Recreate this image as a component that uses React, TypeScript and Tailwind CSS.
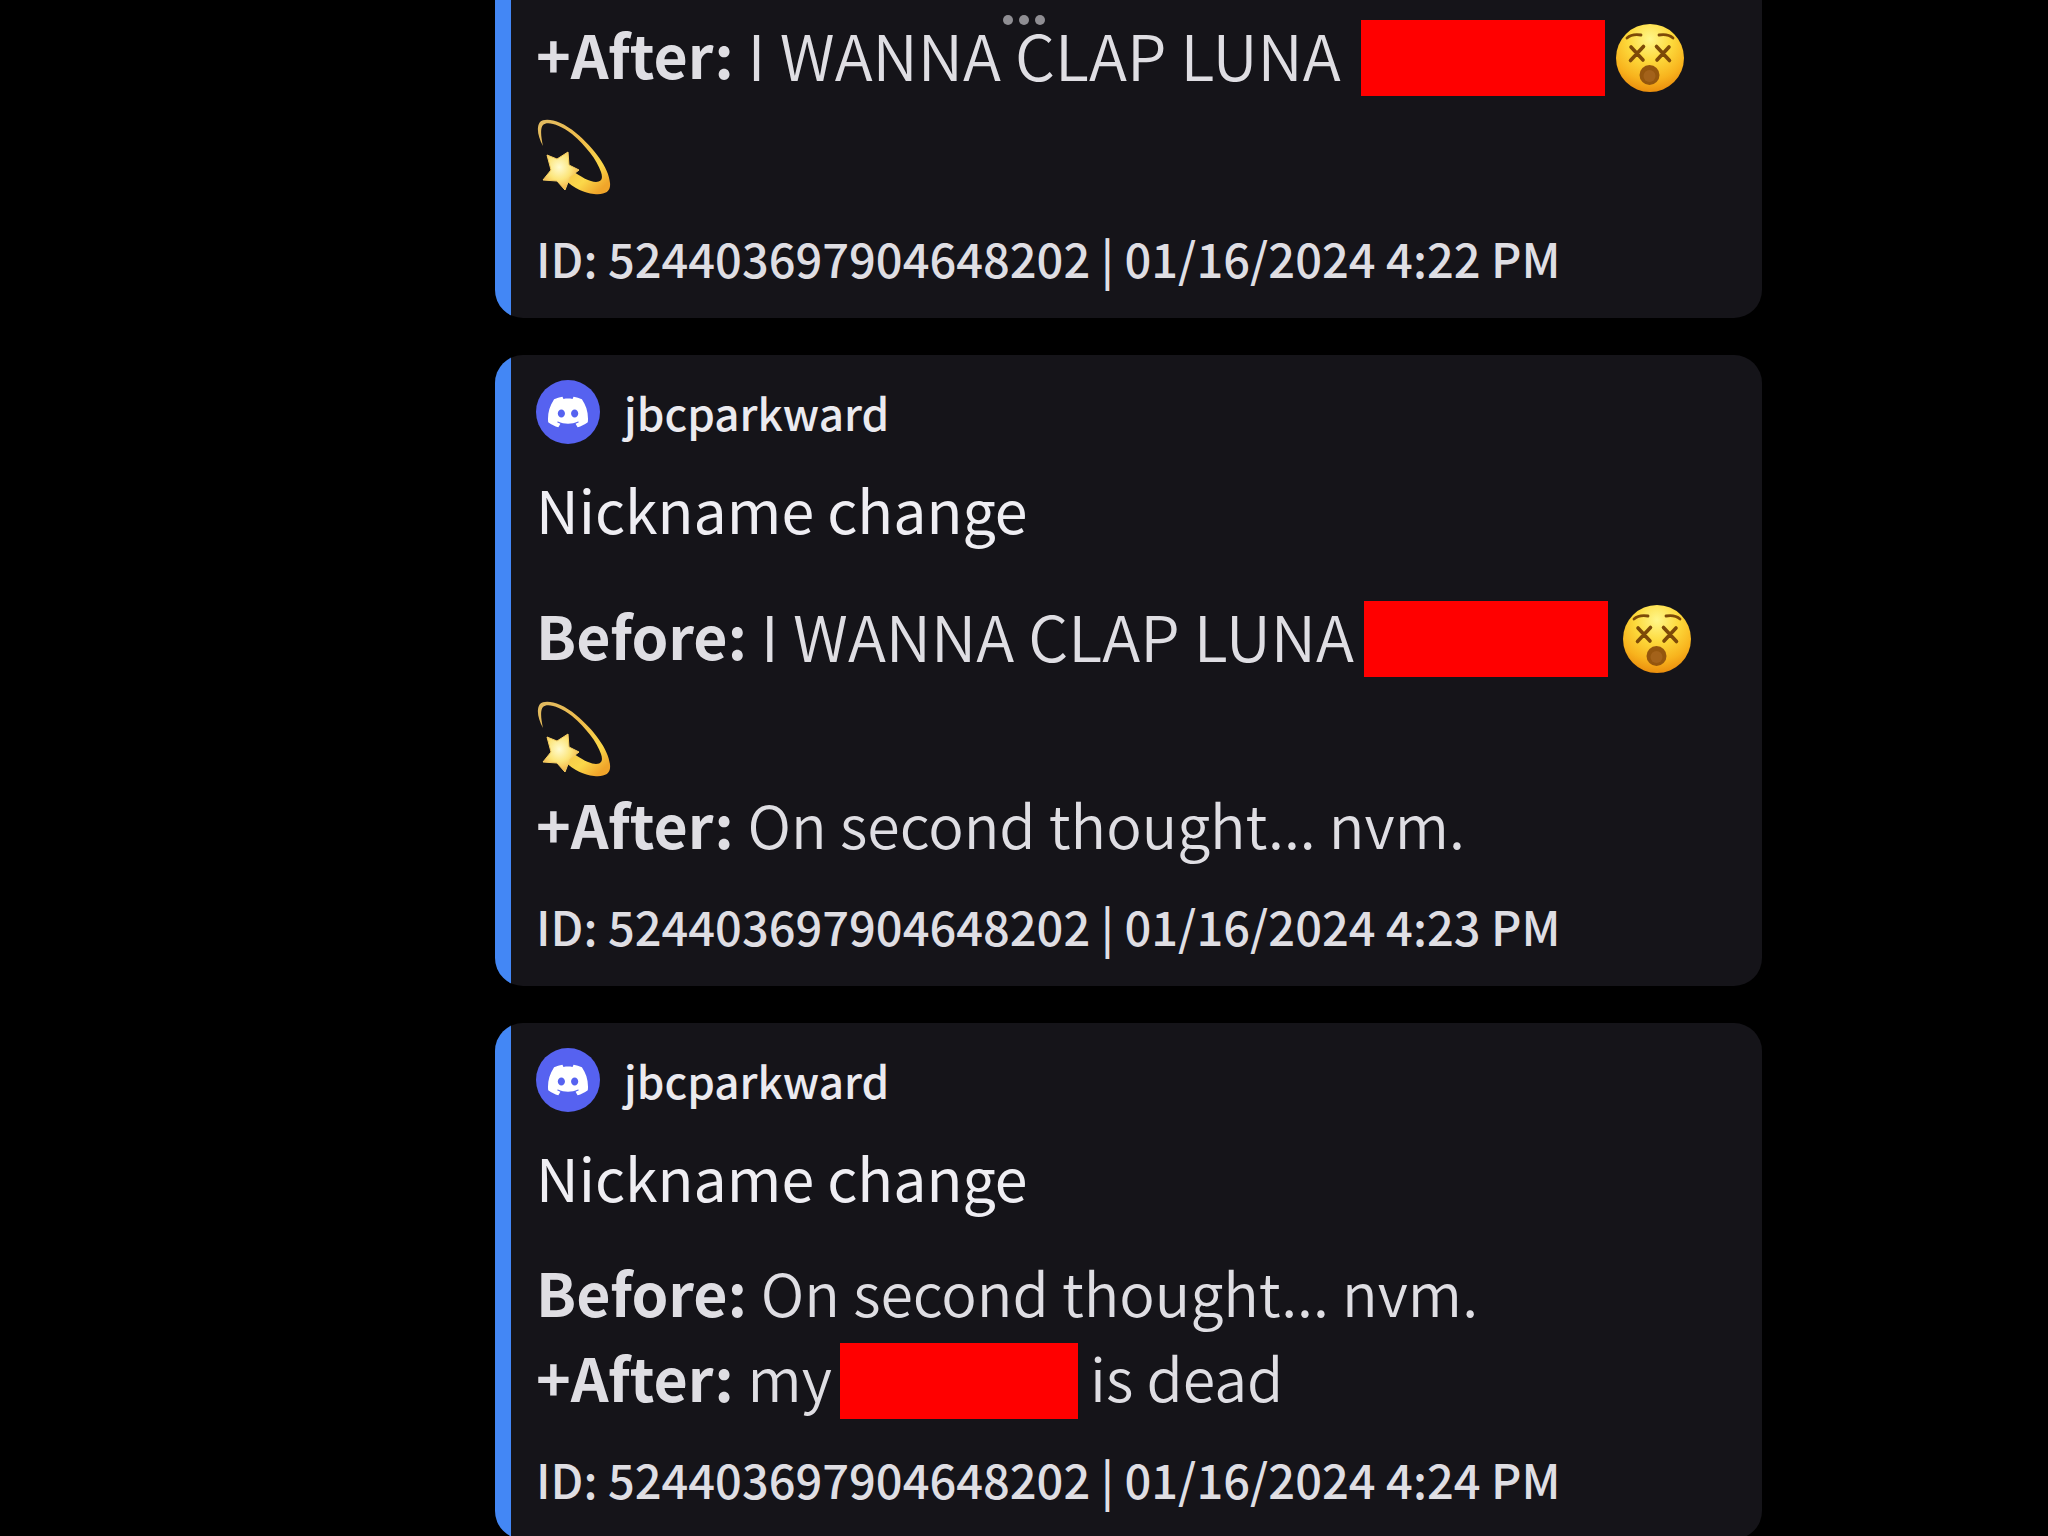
import type { ReactNode } from 'react';
import { SiDiscord } from 'react-icons/si';

function DizzyFace() {
  return (
    <svg viewBox="0 0 70 70" className="mb-[3px] h-[70px] w-[70px] shrink-0" role="img" aria-label="Dizzy face">
      <defs>
        <radialGradient id="face" cx="0.5" cy="0.22" r="0.8">
          <stop offset="0" stopColor="#fff68a" />
          <stop offset="0.4" stopColor="#fdda3c" />
          <stop offset="0.75" stopColor="#f8b31d" />
          <stop offset="1" stopColor="#e98a0c" />
        </radialGradient>
      </defs>
      <circle cx="35" cy="35" r="34" fill="url(#face)" />
      <g fill="none" stroke="#7d4a08" strokeLinecap="round">
        <path d="M12 15Q17 10.5 26 12M44 12Q53 10.5 58 15" strokeWidth="2.8" />
        <path d="M16 24L28 37M28.5 23.5L15.5 37.5M41.5 23.5L54.5 37.5M54 24L42 37" strokeWidth="3.6" />
      </g>
      <circle cx="34.5" cy="52" r="10" fill="#94560e" />
      <circle cx="34.5" cy="53" r="6" fill="#a3621a" />
    </svg>
  );
}

function DizzyStar() {
  return (
    <svg viewBox="0 0 75 76" className="h-[76px] w-[75px] shrink-0" role="img" aria-label="Dizzy">
      <defs>
        <linearGradient id="trail" x1="0" y1="0.1" x2="0.8" y2="1">
          <stop offset="0" stopColor="#e2bb60" />
          <stop offset="0.45" stopColor="#f0bd4a" />
          <stop offset="0.8" stopColor="#fbd84a" />
          <stop offset="1" stopColor="#f0a52a" />
        </linearGradient>
        <radialGradient id="star" cx="0.45" cy="0.4" r="0.65">
          <stop offset="0" stopColor="#fffbd0" />
          <stop offset="0.5" stopColor="#fce57a" />
          <stop offset="1" stopColor="#f0a63c" />
        </radialGradient>
      </defs>
      <path
        d="M7 27C2 18 0 8 4 3C9 -2 25 1 40 14C58 29 73 49 74 64C75 73 69 76 58 75C48 74 38 69 29 61L35 51C45 58 54 63 60 63C66 63 67 59 65 53C61 41 50 27 36 15C23 5 11 2 7 6C4 9 5 18 7 27Z"
        fill="url(#trail)"
      />
      <path
        d="M11 36L21 40L32 33L33 46L43 51L34 58L29 71L21 62L7 61L15 51Z"
        fill="url(#star)"
        stroke="#f7cf63"
        strokeWidth="1"
        strokeLinejoin="round"
      />
    </svg>
  );
}

const Redacted = ({ className }: { className: string }) => (
  <span className={`h-[76px] shrink-0 bg-[#ff0000] ${className}`} aria-label="redacted" />
);

function Row({ label, children, tall }: { label: string; children: ReactNode; tall?: boolean }) {
  return (
    <div className={`flex items-end leading-[84px] ${tall ? 'h-24' : 'h-[85px]'}`}>
      <strong className="mr-[14px] font-bold">{label}</strong>
      {children}
    </div>
  );
}

const StarRow = () => (
  <div className="flex h-[104px] items-end pb-1 last:h-[102px] last:pb-[3px]">
    <DizzyStar />
  </div>
);

function Embed({ time, open, children }: { time: string; open?: boolean; children: ReactNode }) {
  return (
    <article className={`flex shrink-0 overflow-hidden bg-[#151419] ${open ? 'rounded-b-[28px]' : 'rounded-[28px]'}`}>
      <div className="w-4 shrink-0 bg-[#4387f5]" />
      <div className={`min-w-0 flex-1 pr-6 pb-7 pl-[25px] ${open ? '' : 'pt-[25px]'}`}>
        {!open && (
          <>
            <header className="flex items-center gap-6">
              <span className="flex size-16 items-center justify-center rounded-full bg-[#5662f0]">
                <SiDiscord className="size-10 text-white" />
              </span>
              <span className="text-[44px] leading-16 font-medium text-[#ebeaef]">jbcparkward</span>
            </header>
            <h2 className="mt-[23px] mb-[30px] text-[59px] leading-[84px] text-[#efeef3]">Nickname change</h2>
          </>
        )}
        <div className="text-[59px] font-[350] whitespace-nowrap">{children}</div>
        <footer className="mt-7 text-[47px] leading-16 font-medium whitespace-nowrap">
          ID: 524403697904648202 | 01/16/2024 {time}
        </footer>
      </div>
    </article>
  );
}

export default function App() {
  return (
    <main className="relative h-screen overflow-hidden bg-black pr-[286px] pl-[495px] font-['Noto_Sans_CJK_JP','Open_Sans',sans-serif] text-[#dfdee3]">
      <button className="absolute top-[15px] left-1/2 flex -translate-x-1/2 gap-[6px]" aria-label="Window menu">
        <span className="size-[10px] rounded-full bg-[#8f8e93]" />
        <span className="size-[10px] rounded-full bg-[#8f8e93]" />
        <span className="size-[10px] rounded-full bg-[#8f8e93]" />
      </button>

      <div className="flex flex-col gap-[37px]">
        <Embed time="4:22 PM" open>
          <Row label="+After:" tall>
            <span className="text-[63px]">I WANNA CLAP LUNA</span>
            <Redacted className="mr-[10px] ml-5 w-[244px]" />
            <DizzyFace />
          </Row>
          <StarRow />
        </Embed>

        <Embed time="4:23 PM">
          <Row label="Before:" tall>
            <span className="text-[63px]">I WANNA CLAP LUNA</span>
            <Redacted className="mr-[14px] ml-[10px] w-[244px]" />
            <DizzyFace />
          </Row>
          <StarRow />
          <Row label="+After:">
            <span>On second thought... nvm.</span>
          </Row>
        </Embed>

        <Embed time="4:24 PM">
          <Row label="Before:">
            <span>On second thought... nvm.</span>
          </Row>
          <Row label="+After:">
            <span>my</span>
            <Redacted className="mr-3 ml-2 w-[238px]" />
            <span>is dead</span>
          </Row>
        </Embed>
      </div>
    </main>
  );
}
